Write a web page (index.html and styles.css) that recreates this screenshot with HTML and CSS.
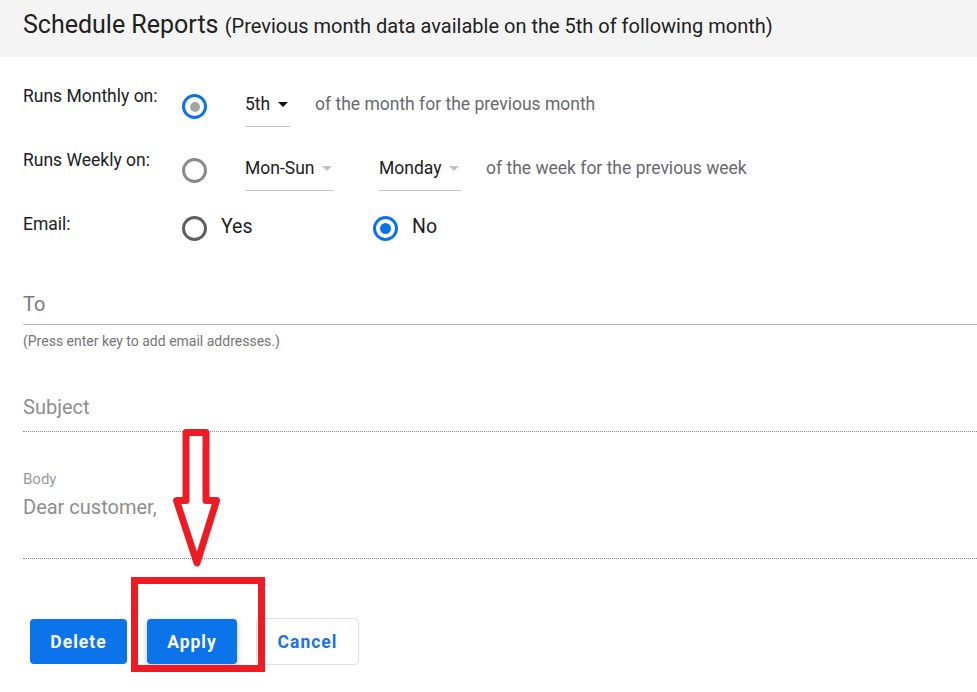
FILE: index.html
```html
<!DOCTYPE html>
<html lang="en">
<head>
  <meta charset="UTF-8">
  <title>Schedule Reports</title>
  <link rel="stylesheet" href="styles.css">
</head>
<body>

  <header class="page-head">
    <h1>Schedule Reports <small>(Previous month data available on the 5th of following month)</small></h1>
  </header>

  <form class="schedule" id="schedule-form">
    <!-- Frequency -->
    <div class="row">
      <span class="row-label">Runs Monthly on:</span>
      <span class="radio on muted"></span>
      <span class="select w-day">5th <i class="caret dark"></i></span>
      <span class="note">of the month for the previous month</span>
    </div>

    <div class="row">
      <span class="row-label">Runs Weekly on:</span>
      <span class="radio"></span>
      <span class="select w-range">Mon-Sun <i class="caret"></i></span>
      <span class="select w-weekday">Monday <i class="caret"></i></span>
      <span class="note">of the week for the previous week</span>
    </div>

    <!-- Email toggle -->
    <div class="row email-row">
      <span class="row-label">Email:</span>
      <label class="option"><span class="radio dark"></span>Yes</label>
      <label class="option"><span class="radio on"></span>No</label>
    </div>

    <!-- Message fields -->
    <div class="field to-field">To</div>
    <div class="hint">(Press enter key to add email addresses.)</div>

    <div class="field subject-field">Subject</div>

    <div class="body-field">
      <div class="body-label">Body</div>
      <div class="body-text">Dear customer,</div>
    </div>

    <div class="actions">
      <button type="button" class="btn btn-primary">Delete</button>
      <button type="button" class="btn btn-primary raised">Apply</button>
      <button type="button" class="btn btn-outline">Cancel</button>
    </div>
  </form>

  <!-- red callout drawn over the form -->
  <svg class="callout" width="977" height="692" viewBox="0 0 977 692">
    <polygon points="186,432.5 206,432.5 206,500.5 216.5,500.5 197,563 176.5,500.5 186,500.5"
             fill="#fff" stroke="#ed1c24" stroke-width="7" stroke-linejoin="round"/>
    <rect x="134.5" y="580.5" width="127" height="88" fill="none" stroke="#ed1c24" stroke-width="7"/>
  </svg>

</body>
</html>
```

FILE: styles.css
```css
body {
  margin: 0;
  font-family: Roboto, "Liberation Sans", Arial, sans-serif;
  color: #212121;
  background: #fff;
  position: relative;
  min-height: 692px;
  overflow: hidden;
}

.page-head {
  height: 57px;
  box-sizing: border-box;
  padding: 10px 0 0 23px;
  background: #f4f4f4;
}

.page-head h1 {
  margin: 0;
  font-size: 25px;
  line-height: 29px;
  font-weight: 400;
  color: #212121;
}

.page-head small {
  font-size: 20px;
}

.schedule {
  padding: 29px 0 0 23px;
}

.row {
  display: flex;
  align-items: flex-start;
  height: 64px;
}

.row-label {
  width: 159px;
  font-size: 17.5px;
  line-height: 20px;
}

.radio {
  width: 25px;
  height: 25px;
  box-sizing: border-box;
  border: 3px solid #8a8a8a;
  border-radius: 50%;
  margin-top: 8px;
  display: flex;
  align-items: center;
  justify-content: center;
  flex-shrink: 0;
}

.radio.dark {
  border-color: #5f5f5f;
}

.radio.on {
  border-color: #0b72e8;
}

.radio.on::after {
  content: '';
  width: 11px;
  height: 11px;
  border-radius: 50%;
  background: #0b72e8;
}

.radio.on.muted::after {
  width: 10px;
  height: 10px;
  background: #a6a6a6;
}

.select {
  display: flex;
  align-items: center;
  box-sizing: border-box;
  height: 41px;
  padding: 8px 0 12px;
  margin-left: 38px;
  border-bottom: 1px solid #c8c8c8;
  font-size: 17.5px;
  line-height: 20px;
  color: #212121;
}

.select + .select {
  margin-left: 45px;
}

.w-day { width: 45px; }
.w-range { width: 89px; }
.w-weekday { width: 82px; }

.caret {
  width: 0;
  height: 0;
  margin-left: 8px;
  border-left: 5px solid transparent;
  border-right: 5px solid transparent;
  border-top: 5px solid #c2c2c2;
}

.caret.dark {
  border-top-color: #111;
}

.note {
  margin: 8px 0 0 25px;
  font-size: 17.5px;
  line-height: 20px;
  color: #666a6e;
}

.email-row .option {
  display: flex;
  align-items: flex-start;
  width: 191px;
  font-size: 19.5px;
  line-height: 25px;
}

.email-row .radio {
  margin: 2px 14px 0 0;
}

.field {
  font-size: 20px;
  line-height: 22px;
}

.to-field {
  margin-top: 15px;
  padding-bottom: 9px;
  border-bottom: 1px solid #bdbdbd;
  color: #7a7a7a;
}

.hint {
  margin-top: 8px;
  font-size: 14px;
  line-height: 16px;
  color: #757575;
}

.subject-field {
  margin-top: 47px;
  padding-bottom: 13px;
  border-bottom: 1px dotted #8a8a8a;
  color: #8e8e8e;
}

.body-field {
  margin-top: 39px;
  padding-bottom: 40px;
  border-bottom: 1px dotted #8a8a8a;
}

.body-label {
  font-size: 15px;
  line-height: 16px;
  color: #9a9a9a;
}

.body-text {
  margin-top: 9px;
  font-size: 20px;
  line-height: 22px;
  color: #8e8e8e;
}

.actions {
  display: flex;
  gap: 20px;
  margin-top: 59px;
  padding-left: 7px;
  align-items: center;
}

.btn {
  height: 45px;
  border-radius: 4px;
  font-family: inherit;
  font-size: 17.5px;
  font-weight: 700;
  letter-spacing: 1px;
  cursor: pointer;
}

.btn-primary {
  border: none;
  background: #0b74ea;
  color: #fff;
}

.btn-primary:first-child { width: 97px; }

.raised {
  width: 90px;
  box-shadow: 0 2px 6px rgba(0, 0, 0, 0.25);
}

.btn-outline {
  width: 103px;
  height: 47px;
  margin-left: -1px;
  background: #fff;
  border: 1px solid #e0e0e0;
  color: #1a73e8;
}

.callout {
  position: absolute;
  top: 0;
  left: 0;
  pointer-events: none;
}
```
